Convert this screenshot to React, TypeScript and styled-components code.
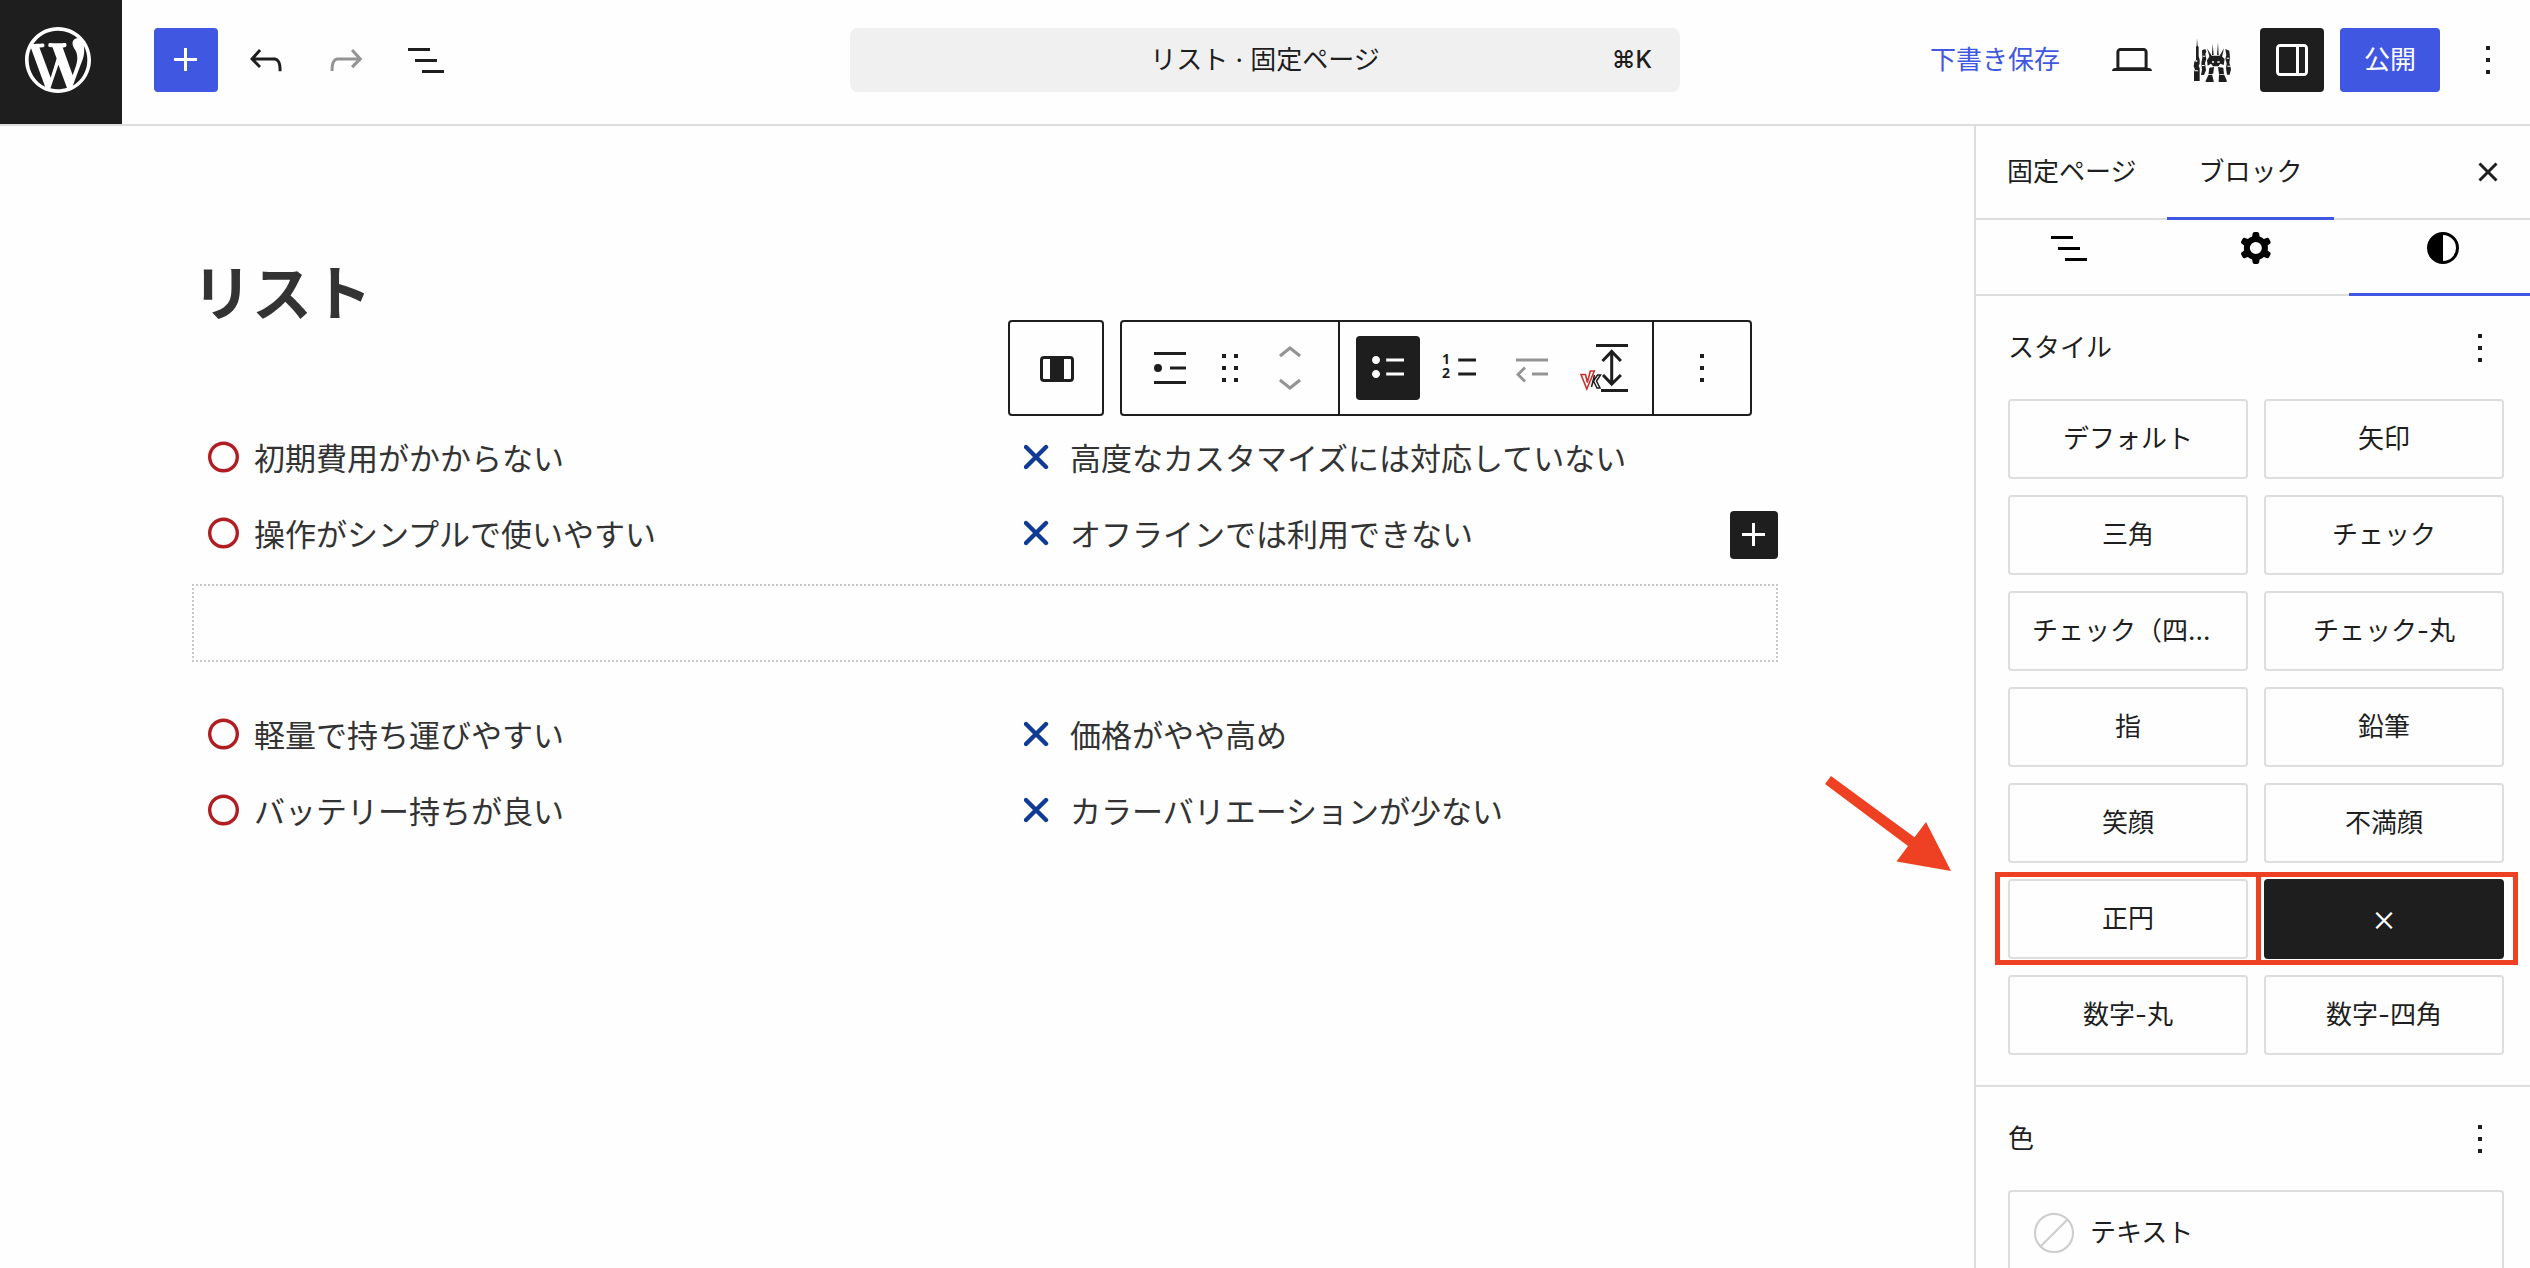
import React from "react";
import styled, { createGlobalStyle, css } from "styled-components";

const INK = "#1e1e1e";
const LINE = "#dddddd";
const BLUE = "#3f57e1";
const MARK = "#ee4023";
const SANS = `Inter, "Noto Sans CJK JP", sans-serif`;
const CJK = `"Noto Sans CJK JP", sans-serif`;

const GlobalStyle = createGlobalStyle`
  *, *::before, *::after { box-sizing: border-box; }
  body {
    margin: 0;
    background: #fefefe;
    color: ${INK};
    font-family: ${SANS};
    font-size: 26px;
    line-height: 40px;
  }
  button { font: inherit; color: inherit; cursor: pointer; }
  h1, h2, ul { margin: 0; padding: 0; }
`;

/* ---------- icons ---------- */

const IconSvg = styled.svg`
  display: block;
  flex: none;
  width: 48px;
  height: 48px;
  fill: currentColor;
`;

const PATHS = {
  plus: "M11 12.5V17.5H12.5V12.5H17.5V11H12.5V6H11V11H6V12.5H11Z",
  undo: "M18.3 11.7c-.6-.6-1.4-.9-2.3-.9H6.7l2.9-3.3-1.1-1-4.5 5L8.5 16l1-1-2.7-2.7H16c.5 0 .9.2 1.3.5 1 1 1 3.4 1 4.5v.3h1.5v-.2c0-1.5 0-4.3-1.5-5.7z",
  redo: "M15.6 6.5l-1.1 1 2.9 3.3H8c-.9 0-1.7.3-2.3.9-1.4 1.5-1.4 4.2-1.4 5.6v.2h1.5v-.3c0-1.1 0-3.5 1-4.5.3-.3.7-.5 1.3-.5h9.2L14.5 15l1.1 1.1 4.6-4.6-4.6-5z",
  listView: "M3 6h11v1.5H3V6Zm3.5 5.5h11V13h-11v-1.5ZM21 17H10v1.5h11V17Z",
  desktop:
    "M20.5 16h-.7V8c0-1.1-.9-2-2-2H6.2c-1.1 0-2 .9-2 2v8h-.7c-.8 0-1.5.7-1.5 1.5h20c0-.8-.7-1.5-1.5-1.5zM5.7 8c0-.3.2-.5.5-.5h11.6c.3 0 .5.2.5.5v7.6H5.7V8z",
  sidebar:
    "M18 4H6c-1.1 0-2 .9-2 2v12c0 1.1.9 2 2 2h12c1.1 0 2-.9 2-2V6c0-1.1-.9-2-2-2zm-4 14.5H6c-.3 0-.5-.2-.5-.5V6c0-.3.2-.5.5-.5h8v13zm4.5-.5c0 .3-.2.5-.5.5h-2.5v-13H18c.3 0 .5.2.5.5v12z",
  more: "M13 19h-2v-2h2v2zm0-6h-2v-2h2v2zm0-6h-2V5h2v2z",
  close:
    "M12 13.06l3.712 3.713 1.061-1.06L13.061 12l3.712-3.712-1.06-1.06L12 10.938 8.288 7.227l-1.061 1.06L10.939 12l-3.712 3.712 1.06 1.061L12 13.061z",
  cog: "M10.289 4.836A1 1 0 0111.275 4h1.306a1 1 0 01.987.836l.244 1.466c.787.26 1.503.679 2.108 1.218l1.393-.522a1 1 0 011.216.437l.653 1.13a1 1 0 01-.23 1.273l-1.148.944a6.025 6.025 0 010 2.435l1.149.946a1 1 0 01.23 1.272l-.653 1.13a1 1 0 01-1.216.437l-1.394-.522c-.605.54-1.32.958-2.108 1.218l-.244 1.466a1 1 0 01-.987.836h-1.306a1 1 0 01-.986-.836l-.244-1.466a5.995 5.995 0 01-2.108-1.218l-1.394.522a1 1 0 01-1.217-.436l-.653-1.131a1 1 0 01.23-1.272l1.149-.946a6.026 6.026 0 010-2.435l-1.148-.944a1 1 0 01-.23-1.272l.653-1.131a1 1 0 011.217-.437l1.393.522a5.994 5.994 0 012.108-1.218l.244-1.466zM14.929 12a3 3 0 11-6 0 3 3 0 016 0z",
  styles:
    "M20 12a8 8 0 1 1-16 0 8 8 0 0 1 16 0Zm-1.5 0a6.5 6.5 0 0 1-6.5 6.5v-13a6.5 6.5 0 0 1 6.5 6.5Z",
  columns:
    "M6 6h13a2 2 0 0 1 2 2v9a2 2 0 0 1-2 2H6a2 2 0 0 1-2-2V8a2 2 0 0 1 2-2ZM6 7.5a.5.5 0 0 0-.5.5v9a.5.5 0 0 0 .5.5h3v-10H6ZM16 7.5v10h3a.5.5 0 0 0 .5-.5V8a.5.5 0 0 0-.5-.5h-3Z",
  listItem:
    "M4 4h16v1.5H4V4Zm0 14.5h16V20H4v-1.5ZM12 11.25h8v1.5h-8v-1.5ZM6 10a2 2 0 1 0 0 4 2 2 0 0 0 0-4Z",
  drag: "M8 7h2V5H8v2zm0 6h2v-2H8v2zm0 6h2v-2H8v2zm6-14v2h2V5h-2zm0 8h2v-2h-2v2zm0 6h2v-2h-2v2z",
  up: "M6.5 12.4L12 8l5.5 4.4-.9 1.2L12 10l-4.5 3.6-1-1.2z",
  down: "M17.5 11.6L12 16l-5.5-4.4.9-1.2L12 14l4.5-3.6 1 1.2z",
  bullets:
    "M11.1 15.8H20v-1.5h-8.9v1.5zm0-8.6v1.5H20V7.2h-8.9zM6 13c-1.1 0-2 .9-2 2s.9 2 2 2 2-.9 2-2-.9-2-2-2zm0-7c-1.1 0-2 .9-2 2s.9 2 2 2 2-.9 2-2-.9-2-2-2z",
  dashes: "M11.1 15.8H20v-1.5h-8.9v1.5zm0-8.6v1.5H20V7.2h-8.9z",
  outdent:
    "M4 7.2v1.5h16V7.2H4zm8 8.6h8v-1.5h-8v1.5zm-4-4.6l-4 4 4 4 1-1-3-3 3-3-1-1z",
};

const Icon = ({ name }: { name: keyof typeof PATHS }) => (
  <IconSvg viewBox="0 0 24 24" aria-hidden="true">
    <path d={PATHS[name]} fillRule="evenodd" clipRule="evenodd" />
  </IconSvg>
);

const DigitText = styled.text`
  font: 700 7px "Open Sans", sans-serif;
`;

const NumberedIcon = () => (
  <IconSvg viewBox="0 0 24 24" aria-hidden="true">
    <path d={PATHS.dashes} />
    <DigitText x="3" y="10">1</DigitText>
    <DigitText x="3" y="17">2</DigitText>
  </IconSvg>
);

const SpacerIcon = () => (
  <IconSvg viewBox="0 0 48 48" aria-hidden="true">
    <path d="M16 0h32v3H16zM21 45h27v3H21z" />
    <g fill="none" stroke="currentColor" strokeWidth="3">
      <path d="M31.7 8v32M22.5 17l9.2-9.5 9.2 9.5M23 31l8.700 9 9.200-9" />
    </g>
    <path d="M1 30.500h4.500l1.800 8 3-11.500h4L6.800 45z" fill="none" stroke="#c8302f" strokeWidth="1.600" />
    <path d="M14.500 31l-3 12M20.500 31h-3l-4 6 3.500 7h3l-3.500-7z" fill="none" stroke={INK} strokeWidth="1.500" />
  </IconSvg>
);

const LogoSvg = styled.svg`
  display: block;
  width: 66px;
  height: 66px;
  fill: #ffffff;
`;

const WordPressLogo = () => (
  <LogoSvg viewBox="0 0 20 20" aria-hidden="true">
    <path d="M20 10c0-5.51-4.49-10-10-10C4.48 0 0 4.49 0 10c0 5.52 4.48 10 10 10 5.51 0 10-4.480 10-10zM7.780 15.370L4.370 6.220c.55-.02 1.170-.08 1.170-.08.5-.06.44-1.130-.06-1.110 0 0-1.450.11-2.370.11-.18 0-.37 0-.58-.01C4.120 2.690 6.870 1.110 10 1.110c2.330 0 4.450.87 6.050 2.340-.68-.11-1.650.39-1.650 1.580 0 .74.45 1.360.9 2.100.35.61.55 1.360.55 2.460 0 1.490-1.400 5-1.400 5l-3.030-8.370c.54-.02.82-.17.82-.17.5-.05.44-1.250-.06-1.220 0 0-1.440.12-2.380.12-.87 0-2.330-.12-2.330-.12-.5-.03-.56 1.200-.06 1.220l.92.08 1.260 3.410zM17.410 10c.24-.64.74-1.870.43-4.250.7 1.290 1.050 2.710 1.050 4.250 0 3.290-1.730 6.240-4.400 7.780.97-2.590 1.940-5.200 2.920-7.780zM6.100 18.090C3.120 16.650 1.110 13.530 1.110 10c0-1.300.23-2.480.72-3.590C3.250 10.300 4.670 14.200 6.100 18.090zm4.030-6.630l2.580 6.980c-.86.29-1.760.45-2.710.45-.79 0-1.570-.11-2.290-.33.81-2.380 1.620-4.740 2.420-7.100z" />
  </LogoSvg>
);

const RobotSvg = styled.svg`
  display: block;
  width: 38px;
  height: 44px;
  fill: ${INK};
`;

const RobotIcon = () => (
  <RobotSvg viewBox="37 51 114 132" aria-hidden="true">
    <path d="M49 52l2 22 3 4v28l3 10v12l-3 6 3 8v38H40v-28l3-6-4-10 2-14 5-6V78l2-4z" />
    <path d="M64 88l10-4 3 8-3 6 3 16-4 12 3 22-6 14h-9l3-16-2-20 3-16zM134 84l12 5 2 22-2 14 5 20-4 16h-8l-3-20 2-14-4-14 3-10z" />
    <path d="M96 68l3 34h-5zM112 64l2 38h-5zM79 82l15 24-6 6zM130 82l-14 24 7 6z" />
    <path d="M88 104h34l10 10-3 18-10-4-6 8h-16l-6-8-10 6-2-16z" />
    <path d="M86 140l14-2-2 18-4 4 5 20v3H75v-4l8-16zM112 138l16 2 2 20 8 18v5h-24l1-24z" />
    <g fill="#fefefe">
      <path d="M44 118h6v4h-6zM43 148h9v3h-9zM66 104h8v3h-8zM138 110h8v3h-8zM64 132h8v3h-8zM140 134h8v3h-8zM94 121h6v4h-6zM110 121h7v4h-7zM80 160h16v2H80zM116 160h16v2h-16z" />
    </g>
  </RobotSvg>
);

/* ---------- shared controls ---------- */

const IconButton = styled.button<{ $tone?: "dark" | "primary" | "muted"; $width?: number; $height?: number }>`
  display: flex;
  flex: none;
  align-items: center;
  justify-content: center;
  width: ${(p) => p.$width ?? 64}px;
  height: ${(p) => p.$height ?? 64}px;
  padding: 0;
  border: 0;
  border-radius: 4px;
  background: transparent;
  ${(p) => p.$tone === "dark" && css`background: ${INK}; color: #ffffff;`}
  ${(p) => p.$tone === "primary" && css`background: ${BLUE}; color: #ffffff;`}
  ${(p) => p.$tone === "muted" && css`color: #949494;`}
`;

const TextButton = styled.button<{ $primary?: boolean }>`
  height: 64px;
  padding: 0 24px;
  border: 0;
  border-radius: 4px;
  white-space: nowrap;
  background: ${(p) => (p.$primary ? BLUE : "transparent")};
  color: ${(p) => (p.$primary ? "#ffffff" : BLUE)};
`;

/* ---------- frame ---------- */

const Editor = styled.div`
  display: flex;
  flex-direction: column;
  height: 100vh;
  overflow: hidden;
`;

const Header = styled.header`
  display: grid;
  grid-template-columns: 1fr 830px 1fr;
  flex: none;
  align-items: start;
  height: 126px;
  border-bottom: 2px solid ${LINE};
`;

const HeaderStart = styled.div`
  display: flex;
  align-items: flex-start;
  gap: 32px;
`;

const LogoLink = styled.a`
  display: flex;
  align-items: center;
  justify-content: center;
  width: 122px;
  height: 124px;
  padding-right: 6px;
  padding-bottom: 4px;
  background: ${INK};
`;

const Tools = styled.div`
  display: flex;
  gap: 16px;
  padding-top: 28px;
`;

const HeaderEnd = styled(Tools)`
  align-items: center;
  justify-content: flex-end;
  padding-right: 10px;
`;

const CommandBar = styled.button`
  display: grid;
  grid-template-columns: 1fr auto 1fr;
  align-items: center;
  height: 64px;
  margin-top: 28px;
  padding: 0 28px;
  border: 0;
  border-radius: 8px;
  background: #f0f0f0;
`;

const CommandTitle = styled.span`
  grid-column: 2;
`;

const Shortcut = styled.kbd`
  justify-self: end;
  font-family: inherit;
  font-size: 24px;
  font-weight: 500;
`;

const Body = styled.div`
  display: grid;
  grid-template-columns: minmax(0, 1fr) 556px;
  flex: 1;
  min-height: 0;
`;

/* ---------- canvas ---------- */

const Canvas = styled.main`
  padding: 128px 196px 0 192px;
  color: #333333;
  font-family: ${CJK};
`;

const Title = styled.h1`
  margin-bottom: 105px;
  font-size: 60px;
  font-weight: 700;
  line-height: 72px;
`;

const Columns = styled.section`
  position: relative;
  display: grid;
  grid-template-columns: 1fr 1fr;
  column-gap: 46px;
`;

const Column = styled.div`
  position: relative;
`;

const BlockList = styled.ul`
  display: flex;
  flex-direction: column;
  gap: 24px;
  padding-left: 16px;
  list-style: none;
`;

const Item = styled.li`
  display: flex;
  align-items: center;
  gap: 14px;
  font-size: 31px;
  line-height: 52px;
`;

const MarkerSvg = styled.svg`
  display: block;
  flex: none;
  width: 32px;
  height: 32px;
  fill: none;
`;

const CircleMarker = () => (
  <MarkerSvg viewBox="0 0 32 32" aria-hidden="true">
    <circle cx="15.500" cy="16" r="13.800" stroke="#b01e23" strokeWidth="3.400" />
  </MarkerSvg>
);

const CrossMarker = () => (
  <MarkerSvg viewBox="0 0 32 32" aria-hidden="true">
    <path d="M2 6l20 20M22 6L2 26" stroke="#0f3a96" strokeWidth="4.400" strokeLinecap="round" />
  </MarkerSvg>
);

const Spacer = styled.div`
  height: 78px;
  margin: 25px 0 46px;
  border: 2px dotted #c8c8c8;
`;

const Inserter = styled.div`
  position: absolute;
  right: 0;
  bottom: 0;
`;

const BlockToolbar = styled.div`
  position: absolute;
  left: 0;
  bottom: calc(100% + 15px);
  display: flex;
  gap: 16px;
  color: ${INK};
`;

const ToolbarBox = styled.div`
  display: flex;
  height: 96px;
  border: 2px solid ${INK};
  border-radius: 4px;
  background: #fefefe;
`;

const ToolbarGroup = styled.div<{ $gap?: number }>`
  display: flex;
  align-items: center;
  gap: ${(p) => p.$gap ?? 0}px;
  padding: 0 16px;

  & + & { border-left: 2px solid ${INK}; }
`;

const Mover = styled.div`
  display: flex;
  flex-direction: column;
`;

/* ---------- sidebar ---------- */

const Sidebar = styled.aside`
  border-left: 2px solid ${LINE};
`;

const SidebarTabs = styled.div`
  display: flex;
  height: 94px;
  padding-right: 10px;
  border-bottom: 2px solid ${LINE};
`;

const CloseSlot = styled.div`
  display: flex;
  align-items: center;
  margin-left: auto;
`;

const Tab = styled.button<{ $active?: boolean }>`
  display: flex;
  align-items: center;
  justify-content: center;
  margin-bottom: -2px;
  padding: 0 31px;
  border: 0;
  border-bottom: 3px solid ${(p) => (p.$active ? BLUE : "transparent")};
  background: transparent;
`;

const InspectorClip = styled.div`
  overflow: hidden;
`;

const InspectorTabs = styled.div`
  display: grid;
  grid-template-columns: repeat(3, 1fr);
  height: 76px;
  margin-right: -6px;
  border-bottom: 2px solid ${LINE};
`;

const InspectorTab = styled(Tab)`
  height: 76px;
  padding: 0 0 17px;
  color: #000000;
`;

const Panel = styled.section`
  padding: 32px 26px 30px 32px;

  & + & { border-top: 2px solid ${LINE}; }
`;

const PanelHeader = styled.div`
  display: flex;
  align-items: center;
  justify-content: space-between;
  height: 39px;
  margin-bottom: 32px;
`;

const PanelTitle = styled.h2`
  font-size: 26px;
  font-weight: 400;
`;

const StyleGrid = styled.div`
  display: grid;
  grid-template-columns: 1fr 1fr;
  gap: 16px;
`;

const StyleCell = styled.div`
  position: relative;
  min-width: 0;
`;

const StyleButton = styled.button<{ $active?: boolean; $cjk?: boolean }>`
  display: block;
  width: 100%;
  height: 80px;
  padding: 0 22px;
  overflow: hidden;
  border: 2px solid ${(p) => (p.$active ? INK : LINE)};
  border-radius: 4px;
  background: ${(p) => (p.$active ? INK : "#fefefe")};
  color: ${(p) => (p.$active ? "#ffffff" : INK)};
  font-family: ${(p) => (p.$cjk ? CJK : SANS)};
  font-weight: ${(p) => (p.$active ? 500 : 400)};
  text-overflow: ellipsis;
  white-space: nowrap;
`;

const Highlight = styled.span<{ $side: "left" | "right" }>`
  position: absolute;
  top: -7px;
  bottom: -6px;
  left: ${(p) => (p.$side === "left" ? -13 : -8)}px;
  right: ${(p) => (p.$side === "left" ? -13 : -14)}px;
  border: 5px solid ${MARK};
  pointer-events: none;
`;

const ArrowSvg = styled.svg`
  position: absolute;
  top: -103px;
  left: -183px;
  width: 126px;
  height: 95px;
  fill: ${MARK};
  pointer-events: none;
`;

const ColorButton = styled.button`
  display: flex;
  align-items: center;
  gap: 16px;
  width: 100%;
  height: 86px;
  padding: 0 24px;
  border: 2px solid ${LINE};
  border-radius: 4px;
  background: transparent;
`;

const SwatchSvg = styled.svg`
  display: block;
  width: 40px;
  height: 40px;
  fill: none;
  stroke: #cccccc;
  stroke-width: 2;
`;

const blockStyles = [
  "デフォルト", "矢印", "三角", "チェック", "チェック（四角）", "チェック-丸", "指",
  "鉛筆", "笑顔", "不満顔", "正円", "×", "数字-丸", "数字-四角",
];

const sections = [
  {
    pros: ["初期費用がかからない", "操作がシンプルで使いやすい"],
    cons: ["高度なカスタマイズには対応していない", "オフラインでは利用できない"],
  },
  {
    pros: ["軽量で持ち運びやすい", "バッテリー持ちが良い"],
    cons: ["価格がやや高め", "カラーバリエーションが少ない"],
  },
];

const MarkedList = ({ items, marker }: { items: string[]; marker: React.ReactNode }) => (
  <BlockList>
    {items.map((text) => (
      <Item key={text}>
        {marker}
        {text}
      </Item>
    ))}
  </BlockList>
);

const Toolbar = () => (
  <BlockToolbar role="toolbar" aria-label="ブロックツール">
    <ToolbarBox>
      <ToolbarGroup>
        <IconButton $width={60} aria-label="親ブロックを選択"><Icon name="columns" /></IconButton>
      </ToolbarGroup>
    </ToolbarBox>
    <ToolbarBox>
      <ToolbarGroup>
        <IconButton aria-label="リスト"><Icon name="listItem" /></IconButton>
        <IconButton $width={56} aria-label="ドラッグ"><Icon name="drag" /></IconButton>
        <Mover>
          <IconButton $height={28} $tone="muted" aria-label="上に移動"><Icon name="up" /></IconButton>
          <IconButton $height={28} $tone="muted" aria-label="下に移動"><Icon name="down" /></IconButton>
        </Mover>
      </ToolbarGroup>
      <ToolbarGroup $gap={8}>
        <IconButton $tone="dark" aria-label="順序なしリスト"><Icon name="bullets" /></IconButton>
        <IconButton aria-label="順序付きリスト"><NumberedIcon /></IconButton>
        <IconButton $tone="muted" aria-label="インデント解除"><Icon name="outdent" /></IconButton>
        <IconButton aria-label="余白"><SpacerIcon /></IconButton>
      </ToolbarGroup>
      <ToolbarGroup>
        <IconButton aria-label="オプション"><Icon name="more" /></IconButton>
      </ToolbarGroup>
    </ToolbarBox>
  </BlockToolbar>
);

export default function App() {
  return (
    <>
      <GlobalStyle />
      <Editor>
        <Header>
          <HeaderStart>
            <LogoLink href="#" aria-label="WordPress"><WordPressLogo /></LogoLink>
            <Tools>
              <IconButton $tone="primary" aria-label="ブロックを追加"><Icon name="plus" /></IconButton>
              <IconButton aria-label="元に戻す"><Icon name="undo" /></IconButton>
              <IconButton $tone="muted" aria-label="やり直す"><Icon name="redo" /></IconButton>
              <IconButton aria-label="ドキュメント概観"><Icon name="listView" /></IconButton>
            </Tools>
          </HeaderStart>
          <CommandBar>
            <CommandTitle>リスト · 固定ページ</CommandTitle>
            <Shortcut>⌘K</Shortcut>
          </CommandBar>
          <HeaderEnd>
            <TextButton>下書き保存</TextButton>
            <IconButton aria-label="表示"><Icon name="desktop" /></IconButton>
            <IconButton aria-label="プラグイン"><RobotIcon /></IconButton>
            <IconButton $tone="dark" aria-label="設定"><Icon name="sidebar" /></IconButton>
            <TextButton $primary>公開</TextButton>
            <IconButton aria-label="オプション"><Icon name="more" /></IconButton>
          </HeaderEnd>
        </Header>

        <Body>
          <Canvas>
            <Title>リスト</Title>
            {sections.map((section, index) => (
              <React.Fragment key={index}>
                {index > 0 && <Spacer />}
                <Columns>
                  <Column>
                    <MarkedList items={section.pros} marker={<CircleMarker />} />
                  </Column>
                  <Column>
                    {index === 0 && <Toolbar />}
                    <MarkedList items={section.cons} marker={<CrossMarker />} />
                  </Column>
                  {index === 0 && (
                    <Inserter>
                      <IconButton $tone="dark" $width={48} $height={48} aria-label="ブロックを追加">
                        <Icon name="plus" />
                      </IconButton>
                    </Inserter>
                  )}
                </Columns>
              </React.Fragment>
            ))}
          </Canvas>

          <Sidebar>
            <SidebarTabs>
              <Tab>固定ページ</Tab>
              <Tab $active>ブロック</Tab>
              <CloseSlot>
                <IconButton aria-label="閉じる"><Icon name="close" /></IconButton>
              </CloseSlot>
            </SidebarTabs>
            <InspectorClip>
              <InspectorTabs>
                <InspectorTab aria-label="リスト表示"><Icon name="listView" /></InspectorTab>
                <InspectorTab aria-label="設定"><Icon name="cog" /></InspectorTab>
                <InspectorTab $active aria-label="スタイル"><Icon name="styles" /></InspectorTab>
              </InspectorTabs>
            </InspectorClip>

            <Panel>
              <PanelHeader>
                <PanelTitle>スタイル</PanelTitle>
                <IconButton $width={48} $height={48} aria-label="スタイルのオプション"><Icon name="more" /></IconButton>
              </PanelHeader>
              <StyleGrid>
                {blockStyles.map((label) => (
                  <StyleCell key={label}>
                    <StyleButton $active={label === "×"} $cjk={label === "×"}>{label}</StyleButton>
                    {label === "正円" && (
                      <>
                        <Highlight $side="left" />
                        <ArrowSvg viewBox="0 0 126 95" aria-hidden="true">
                          <path d="M6 0L89.500 61.300 101 46l25 49-54.500-9.500L83 70 0 8z" />
                        </ArrowSvg>
                      </>
                    )}
                    {label === "×" && <Highlight $side="right" />}
                  </StyleCell>
                ))}
              </StyleGrid>
            </Panel>

            <Panel>
              <PanelHeader>
                <PanelTitle>色</PanelTitle>
                <IconButton $width={48} $height={48} aria-label="色のオプション"><Icon name="more" /></IconButton>
              </PanelHeader>
              <ColorButton>
                <SwatchSvg viewBox="0 0 40 40" aria-hidden="true">
                  <circle cx="20" cy="20" r="19" />
                  <path d="M6.500 33.500l27-27" />
                </SwatchSvg>
                テキスト
              </ColorButton>
            </Panel>
          </Sidebar>
        </Body>
      </Editor>
    </>
  );
}
